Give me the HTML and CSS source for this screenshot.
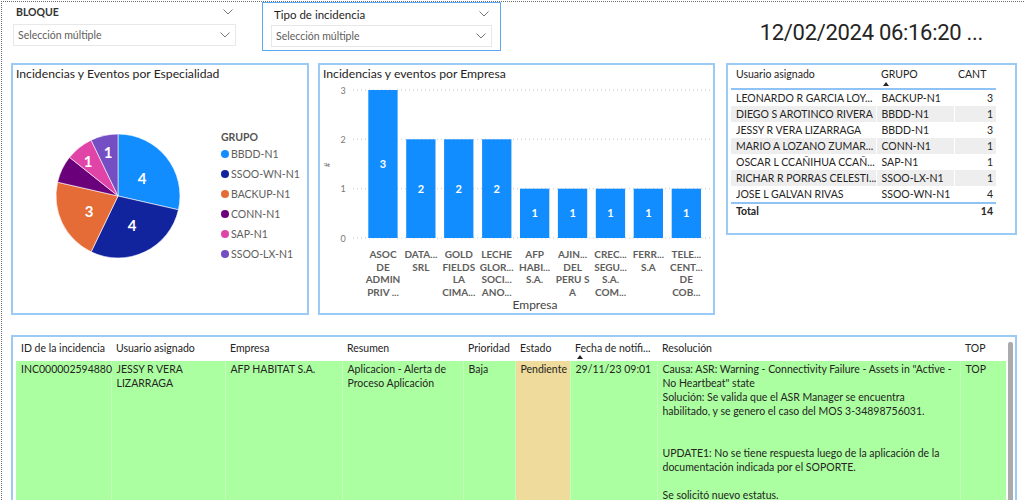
FILE: index.html
```html
<!DOCTYPE html>
<html lang="es">
<head>
<meta charset="utf-8">
<title>Incidencias</title>
<link rel="stylesheet" href="styles.css">
</head>
<body>
<div class="canvas">
  <div class="top">
    <div class="slicer s1">
      <div class="slicer-head">
        <span class="slicer-title">BLOQUE</span>
        <svg class="chev" width="10" height="6" viewBox="0 0 10 6"><polyline points="0.5,0.5 5,5 9.5,0.5"/></svg>
      </div>
      <div class="dropdown">
        <span>Selección múltiple</span>
        <svg class="chev" width="10" height="6" viewBox="0 0 10 6"><polyline points="0.5,0.5 5,5 9.5,0.5"/></svg>
      </div>
    </div>
    <div class="slicer s2">
      <div class="slicer-head">
        <span class="slicer-title normal">Tipo de incidencia</span>
        <svg class="chev" width="10" height="6" viewBox="0 0 10 6"><polyline points="0.5,0.5 5,5 9.5,0.5"/></svg>
      </div>
      <div class="dropdown">
        <span>Selección múltiple</span>
        <svg class="chev" width="10" height="6" viewBox="0 0 10 6"><polyline points="0.5,0.5 5,5 9.5,0.5"/></svg>
      </div>
    </div>
    <div class="clock">12/02/2024 06:16:20 ...</div>
  </div>

  <div class="mid">
    <div class="card pie-card">
      <div class="card-title">Incidencias y Eventos por Especialidad</div>
      <div class="pie-body">
        <svg class="pie" width="208" height="226" viewBox="0 0 208 226">
          <g stroke="#ffffff" stroke-width="0.6">
            <path fill="#118dff" d="M105,111 L105,49 A62,62 0 0 1 165.446,124.796 Z"/>
            <path fill="#12239e" d="M105,111 L165.446,124.796 A62,62 0 0 1 78.099,166.860 Z"/>
            <path fill="#e66c37" d="M105,111 L78.099,166.860 A62,62 0 0 1 44.554,97.204 Z"/>
            <path fill="#6b007b" d="M105,111 L44.554,97.204 A62,62 0 0 1 56.527,72.344 Z"/>
            <path fill="#e044a7" d="M105,111 L56.527,72.344 A62,62 0 0 1 78.099,55.140 Z"/>
            <path fill="#744ec2" d="M105,111 L78.099,55.140 A62,62 0 0 1 105,49 Z"/>
          </g>
          <g class="pie-lbl">
            <text x="129" y="99">4</text>
            <text x="119" y="146">4</text>
            <text x="76" y="132">3</text>
            <text x="75" y="82">1</text>
            <text x="95" y="73">1</text>
          </g>
        </svg>
        <div class="legend">
          <div class="legend-title">GRUPO</div>
          <div class="legend-item"><span class="dot c1"></span>BBDD-N1</div>
          <div class="legend-item"><span class="dot c2"></span>SSOO-WN-N1</div>
          <div class="legend-item"><span class="dot c3"></span>BACKUP-N1</div>
          <div class="legend-item"><span class="dot c4"></span>CONN-N1</div>
          <div class="legend-item"><span class="dot c5"></span>SAP-N1</div>
          <div class="legend-item"><span class="dot c6"></span>SSOO-LX-N1</div>
        </div>
      </div>
    </div>

    <div class="card bar-card">
      <div class="card-title">Incidencias y eventos por Empresa</div>
      <svg class="bars" width="393" height="228" viewBox="0 0 393 228">
        <g class="grid">
          <line x1="33" y1="5" x2="395" y2="5"/>
          <line x1="33" y1="54.3" x2="395" y2="54.3"/>
          <line x1="33" y1="103.7" x2="395" y2="103.7"/>
          <line x1="33" y1="153" x2="395" y2="153"/>
        </g>
        <g class="ytick">
          <text x="23" y="8.5">3</text>
          <text x="23" y="57.8">2</text>
          <text x="23" y="107.2">1</text>
          <text x="23" y="156.5">0</text>
        </g>
        <text class="ytitle" x="10" y="80" transform="rotate(-90 10 80)">#</text>
        <g fill="#118dff">
          <rect x="48.3" y="5" width="29.3" height="148"/>
          <rect x="86.2" y="54.3" width="29.3" height="98.7"/>
          <rect x="124.1" y="54.3" width="29.3" height="98.7"/>
          <rect x="162.1" y="54.3" width="29.3" height="98.7"/>
          <rect x="200" y="103.7" width="29.3" height="49.3"/>
          <rect x="237.9" y="103.7" width="29.3" height="49.3"/>
          <rect x="275.8" y="103.7" width="29.3" height="49.3"/>
          <rect x="313.7" y="103.7" width="29.3" height="49.3"/>
          <rect x="351.7" y="103.7" width="29.3" height="49.3"/>
        </g>
        <g class="bar-lbl">
          <text x="63" y="83">3</text>
          <text x="100.9" y="107.7">2</text>
          <text x="138.8" y="107.7">2</text>
          <text x="176.7" y="107.7">2</text>
          <text x="214.6" y="132.3">1</text>
          <text x="252.6" y="132.3">1</text>
          <text x="290.5" y="132.3">1</text>
          <text x="328.4" y="132.3">1</text>
          <text x="366.3" y="132.3">1</text>
        </g>
        <g class="cat">
          <text x="63" y="173"><tspan x="63">ASOC</tspan><tspan x="63" dy="12.5">DE</tspan><tspan x="63" dy="12.5">ADMIN</tspan><tspan x="63" dy="12.5">PRIV ...</tspan></text>
          <text x="100.9" y="173"><tspan x="100.9">DATA...</tspan><tspan x="100.9" dy="12.5">SRL</tspan></text>
          <text x="138.8" y="173"><tspan x="138.8">GOLD</tspan><tspan x="138.8" dy="12.5">FIELDS</tspan><tspan x="138.8" dy="12.5">LA</tspan><tspan x="138.8" dy="12.5">CIMA...</tspan></text>
          <text x="176.7" y="173"><tspan x="176.7">LECHE</tspan><tspan x="176.7" dy="12.5">GLOR...</tspan><tspan x="176.7" dy="12.5">SOCI...</tspan><tspan x="176.7" dy="12.5">ANO...</tspan></text>
          <text x="214.6" y="173"><tspan x="214.6">AFP</tspan><tspan x="214.6" dy="12.5">HABI...</tspan><tspan x="214.6" dy="12.5">S.A.</tspan></text>
          <text x="252.6" y="173"><tspan x="252.6">AJIN...</tspan><tspan x="252.6" dy="12.5">DEL</tspan><tspan x="252.6" dy="12.5">PERU S</tspan><tspan x="252.6" dy="12.5">A</tspan></text>
          <text x="290.5" y="173"><tspan x="290.5">CREC...</tspan><tspan x="290.5" dy="12.5">SEGU...</tspan><tspan x="290.5" dy="12.5">S.A.</tspan><tspan x="290.5" dy="12.5">COM...</tspan></text>
          <text x="328.4" y="173"><tspan x="328.4">FERR...</tspan><tspan x="328.4" dy="12.5">S.A</tspan></text>
          <text x="366.3" y="173"><tspan x="366.3">TELE...</tspan><tspan x="366.3" dy="12.5">CENT...</tspan><tspan x="366.3" dy="12.5">DE</tspan><tspan x="366.3" dy="12.5">COB...</tspan></text>
        </g>
        <text class="xtitle" x="215" y="224">Empresa</text>
      </svg>
    </div>

    <div class="card grid-card">
      <table class="mini">
        <colgroup><col class="m1"><col class="m2"><col class="m3"></colgroup>
        <thead>
          <tr><th>Usuario asignado</th><th class="sorted">GRUPO<span class="sort"></span></th><th>CANT</th></tr>
        </thead>
        <tbody>
          <tr><td>LEONARDO R GARCIA LOY...</td><td>BACKUP-N1</td><td class="num">3</td></tr>
          <tr class="alt"><td>DIEGO S AROTINCO RIVERA</td><td>BBDD-N1</td><td class="num">1</td></tr>
          <tr><td>JESSY R VERA LIZARRAGA</td><td>BBDD-N1</td><td class="num">3</td></tr>
          <tr class="alt"><td>MARIO A LOZANO ZUMAR...</td><td>CONN-N1</td><td class="num">1</td></tr>
          <tr><td>OSCAR L CCAÑIHUA CCAÑ...</td><td>SAP-N1</td><td class="num">1</td></tr>
          <tr class="alt"><td>RICHAR R PORRAS CELESTI...</td><td>SSOO-LX-N1</td><td class="num">1</td></tr>
          <tr><td>JOSE L GALVAN RIVAS</td><td>SSOO-WN-N1</td><td class="num">4</td></tr>
        </tbody>
        <tfoot>
          <tr><td>Total</td><td></td><td class="num">14</td></tr>
        </tfoot>
      </table>
    </div>
  </div>

  <div class="card bottom-card">
    <table class="detail">
      <colgroup>
        <col class="d1"><col class="d2"><col class="d3"><col class="d4"><col class="d5"><col class="d6"><col class="d7"><col class="d8"><col class="d9">
      </colgroup>
      <thead>
        <tr>
          <th>ID de la incidencia</th>
          <th>Usuario asignado</th>
          <th>Empresa</th>
          <th>Resumen</th>
          <th>Prioridad</th>
          <th>Estado</th>
          <th class="sorted">Fecha de notifi...<span class="sort"></span></th>
          <th>Resolución</th>
          <th>TOP</th>
        </tr>
      </thead>
      <tbody>
        <tr>
          <td class="first">INC000002594880</td>
          <td>JESSY R VERA<br>LIZARRAGA</td>
          <td>AFP HABITAT S.A.</td>
          <td>Aplicacion - Alerta de<br>Proceso Aplicación</td>
          <td>Baja</td>
          <td class="estado">Pendiente</td>
          <td>29/11/23 09:01</td>
          <td>Causa: ASR: Warning - Connectivity Failure - Assets in "Active -<br>No Heartbeat" state<br>Solución: Se valida que el ASR Manager se encuentra<br>habilitado, y se genero el caso del MOS 3-34898756031.<br><br><br>UPDATE1: No se tiene respuesta luego de la aplicación de la<br>documentación indicada por el SOPORTE.<br><br>Se solicitó nuevo estatus.</td>
          <td>TOP</td>
        </tr>
      </tbody>
    </table>
    <div class="scrollbar"></div>
  </div>
</div>
</body>
</html>
```

FILE: styles.css
```css
* { box-sizing: border-box; }

body {
  margin: 0;
  background: #ffffff;
  font-family: "Segoe UI", Lato, "Noto Sans", sans-serif;
  color: #252423;
}

.canvas {
  margin: 1px 0 0 1px;
  height: 499px;
  overflow: hidden;
  border-top: 1px dotted #6b6b6b;
  border-left: 1px dotted #6b6b6b;
}

/* ---------- top row ---------- */
.top {
  display: flex;
  align-items: flex-start;
  height: 61px;
}

.slicer-head {
  display: flex;
  align-items: center;
  justify-content: space-between;
  height: 20px;
  padding: 0 3px;
}

.slicer-title {
  font-size: 10.5px;
  font-weight: 700;
  color: #333333;
}
.slicer-title.normal { font-weight: 400; font-size: 11.5px; color: #252423; }

.chev polyline {
  fill: none;
  stroke: #777777;
  stroke-width: 1;
}

.dropdown {
  display: flex;
  align-items: center;
  justify-content: space-between;
  height: 22px;
  margin-top: 2px;
  padding: 0 5px 0 4px;
  border: 1px solid #e8e8e8;
  font-size: 10.5px;
  color: #605e5c;
}

.s1 { margin-left: 11px; width: 223px; }

.s2 {
  margin-left: 26px;
  width: 239px;
  height: 49px;
  padding: 0 8px;
  border: 1px solid #5ba7f2;
}
.s2 .slicer-head { height: 22px; }
.s2 .dropdown { margin-top: 0; }

.clock {
  margin-left: auto;
  margin-right: 41px;
  margin-top: 19px;
  font-family: Roboto, "DejaVu Sans", sans-serif;
  font-size: 22px;
  line-height: 24px;
  letter-spacing: -0.3px;
  color: #252423;
}

/* ---------- cards ---------- */
.mid {
  display: flex;
  align-items: flex-start;
}

.card {
  background: #ffffff;
  border: 2px solid #9ccaf6;
}

.card-title {
  height: 20px;
  padding: 0 0 0 3px;
  font-size: 12.2px;
  line-height: 17px;
  color: #252423;
}

.pie-card { margin-left: 9px; width: 298px; height: 252px; }
.bar-card { margin-left: 9px; width: 397px; height: 252px; }
.grid-card { margin-left: 11px; width: 291px; height: 172px; }

/* pie */
.pie-body { display: flex; align-items: flex-start; }
.pie { display: block; flex: none; }
.pie-lbl text {
  fill: #ffffff;
  font-size: 15px;
  font-weight: 700;
  text-anchor: middle;
}

.legend {
  margin-top: 44px;
  font-size: 10.5px;
  color: #605e5c;
}
.legend-title {
  line-height: 16px;
  margin-bottom: -1px;
  font-weight: 700;
  color: #555555;
}
.legend-item {
  display: flex;
  align-items: center;
  height: 20px;
  white-space: nowrap;
}
.dot {
  width: 8px;
  height: 8px;
  border-radius: 50%;
  margin-right: 2px;
}
.c1 { background: #118dff; }
.c2 { background: #12239e; }
.c3 { background: #e66c37; }
.c4 { background: #6b007b; }
.c5 { background: #e044a7; }
.c6 { background: #744ec2; }

/* bars */
.bars { display: block; }
.grid line {
  stroke: #c8c8c8;
  stroke-width: 1;
  stroke-dasharray: 1 3;
}
.ytick text {
  font-size: 9px;
  fill: #777777;
  text-anchor: middle;
}
.ytitle {
  font-size: 8px;
  fill: #777777;
  text-anchor: middle;
}
.bar-lbl text {
  fill: #ffffff;
  font-size: 11px;
  font-weight: 700;
  text-anchor: middle;
}
.cat text {
  fill: #605e5c;
  font-size: 10px;
  font-weight: 700;
  text-anchor: middle;
}
.xtitle {
  fill: #444444;
  font-size: 12px;
  text-anchor: middle;
}

/* small matrix table */
.mini {
  margin-left: 3px;
  width: 265px;
  table-layout: fixed;
  border-collapse: collapse;
  font-size: 10.5px;
  color: #252423;
}
.mini .m1 { width: 145px; }
.mini .m2 { width: 78px; }
.mini .m3 { width: 42px; }

.mini th {
  height: 24px;
  padding: 2px 0 0 5px;
  vertical-align: top;
  text-align: left;
  font-weight: 400;
  line-height: 14px;
  white-space: nowrap;
  border-bottom: 2px solid #8fc2f5;
  position: relative;
}
.mini th:last-child { padding-left: 4px; }

.mini td {
  height: 16px;
  padding: 0 0 0 5px;
  line-height: 16px;
  white-space: nowrap;
  overflow: hidden;
}
.mini tr.alt td { background: #eeeeee; }
.mini td + td { border-left: 1px solid #ffffff; }
.mini td.num { text-align: right; padding-right: 3px; }

.mini tfoot td {
  border-top: 2px solid #8fc2f5;
  font-weight: 700;
  line-height: 13px;
  border-left: 0;
}

.sort {
  position: absolute;
  left: 7px;
  bottom: 2px;
  width: 0;
  height: 0;
  border-left: 3.5px solid transparent;
  border-right: 3.5px solid transparent;
  border-bottom: 4px solid #252423;
}

/* bottom detail table */
.bottom-card {
  margin: 20px 0 0 9px;
  width: 1006px;
  height: 200px;
  display: flex;
  align-items: flex-start;
}

.detail {
  margin-left: 3px;
  width: 990px;
  flex: none;
  table-layout: fixed;
  border-collapse: collapse;
  font-size: 10.5px;
  color: #252423;
}
.d1 { width: 95px; }
.d2 { width: 114px; }
.d3 { width: 117px; }
.d4 { width: 121px; }
.d5 { width: 52px; }
.d6 { width: 55px; }
.d7 { width: 87px; }
.d8 { width: 303px; }
.d9 { width: 46px; }

.detail th {
  height: 24px;
  padding: 4px 0 0 5px;
  vertical-align: top;
  text-align: left;
  font-weight: 400;
  line-height: 14px;
  white-space: nowrap;
  overflow: hidden;
  position: relative;
}

.detail td {
  height: 170px;
  padding: 1px 0 0 5px;
  vertical-align: top;
  line-height: 14px;
  white-space: nowrap;
  background: #abffa0;
  border-left: 1px solid #c2ffb9;
}
.detail td.first { border-left: 0; }
.detail td.estado { background: #efdc9c; }

.scrollbar {
  margin: 5px 0 0 2px;
  width: 5px;
  height: 170px;
  background: #ababab;
  border-radius: 2px;
}
```
